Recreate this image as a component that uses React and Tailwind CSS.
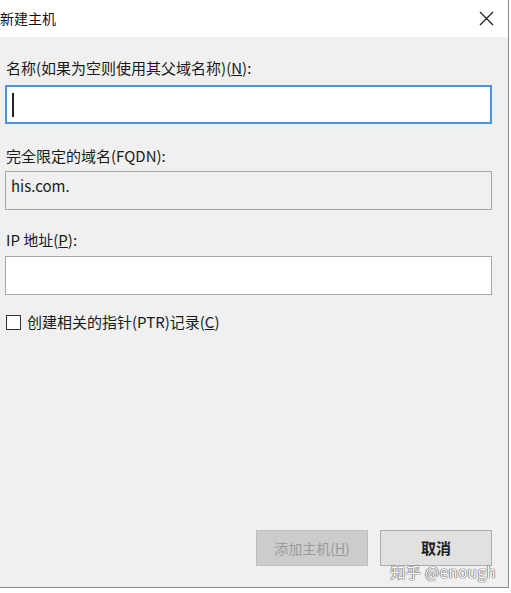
import React from "react";

const font = { fontFamily: '"Noto Sans CJK SC", "Noto Sans", sans-serif' };

const Label = ({ children }) => (
  <div className="text-[15px] leading-[20px] text-[#1a1a1a] pl-[6px]">{children}</div>
);

const App = () => {
  return (
    <div className="w-[511px] h-[593px] bg-white" style={font}>
      <div className="w-[509px] h-[588px] flex flex-col border-r border-b border-[#8a8a8a]">
        {/* title bar */}
        <div className="h-[37px] bg-white flex items-center justify-between pr-[14px]">
          <span className="text-[14px] text-[#111] pl-0">新建主机</span>
          <svg width="15" height="15" viewBox="0 0 15 15" className="text-[#222]">
            <path d="M1 1 L14 14 M14 1 L1 14" stroke="currentColor" strokeWidth="1.3" />
          </svg>
        </div>

        {/* body */}
        <div className="flex-1 bg-[#f0f0f0] flex flex-col pr-[16px]">
          <div className="pt-[21px]">
            <Label>
              名称(如果为空则使用其父域名称)(<span className="underline">N</span>):
            </Label>
          </div>
          <div className="ml-[5px] mt-[7px] h-[39px] bg-white border-2 border-[#4a94d8] flex items-center pl-[5px]">
            <div className="w-[2px] h-[24px] bg-[#222]" />
          </div>

          <div className="mt-[22px]">
            <Label>完全限定的域名(FQDN):</Label>
          </div>
          <div className="ml-[5px] mt-[5px] h-[39px] bg-[#f0f0f0] border border-[#a8a8a8] pl-[5px] pt-[1px]">
            <span className="text-[15px] leading-[24px] text-[#1a1a1a]">his.com.</span>
          </div>

          <div className="mt-[20px]">
            <Label>
              IP 地址(<span className="underline">P</span>):
            </Label>
          </div>
          <div className="ml-[5px] mt-[6px] h-[39px] bg-white border border-[#a8a8a8]" />

          <div className="mt-[17px] ml-[6px] flex items-center gap-[6px]">
            <div className="w-[15px] h-[15px] border border-[#333] bg-white" />
            <span className="text-[15px] leading-[20px] text-[#1a1a1a]">
              创建相关的指针(PTR)记录(<span className="underline">C</span>)
            </span>
          </div>

          <div className="flex-1" />

          <div className="flex justify-end gap-[12px] pb-[21px] relative">
            <button className="w-[112px] h-[36px] bg-[#cccccc] border border-[#bfbfbf] text-[14px] text-[#9a9a9a]">
              添加主机(<span className="underline">H</span>)
            </button>
            <button className="w-[112px] h-[36px] bg-[#e1e1e1] border border-[#adadad] text-[15px] font-bold text-[#222]">
              取消
            </button>
            <div
              className="absolute right-[-4px] bottom-[4px] text-[15px] text-white tracking-[0.5px]"
              style={{ textShadow: "0 0 1px #555, 0 0 1px #555, 0 0 1px #555" }}
            >
              知乎 @enough
            </div>
          </div>
        </div>
      </div>
    </div>
  );
};

export default App;
